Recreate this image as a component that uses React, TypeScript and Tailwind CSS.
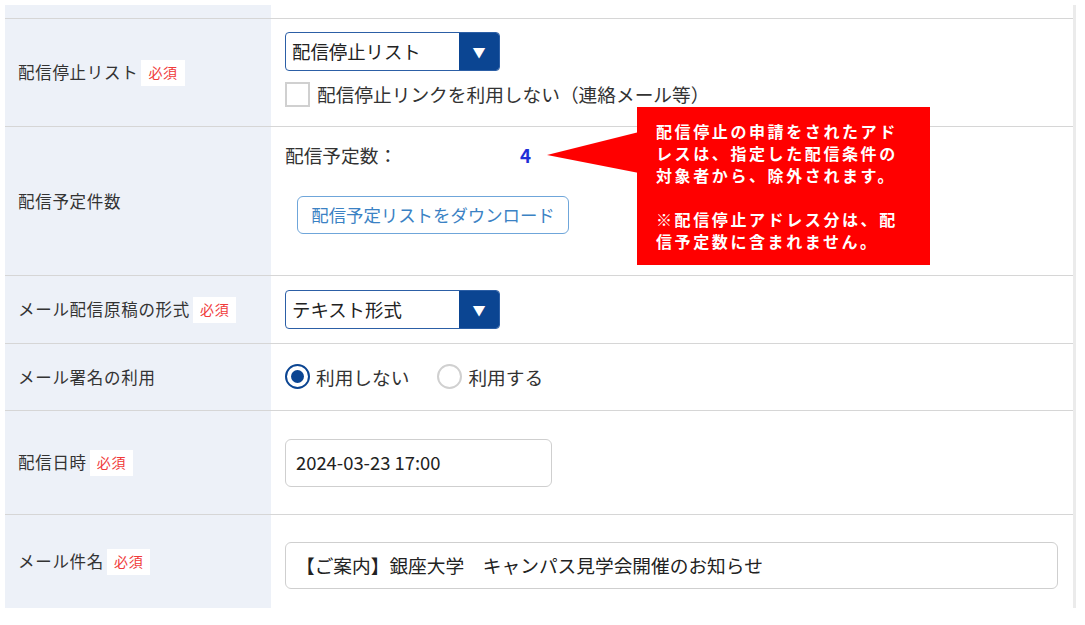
import React from "react";

const font = { fontFamily: '"Noto Sans CJK JP", "Noto Sans", sans-serif' };

const Required = () => (
  <span className="ml-[3px] inline-flex h-[26px] items-center bg-white px-[7px] text-[14px] text-[#f03a3a]">
    必須
  </span>
);

const Label = ({ text, required }: { text: string; required?: boolean }) => (
  <div className="flex w-[266px] shrink-0 items-center bg-[#edf1f8] pl-[13px] text-[16.5px] tracking-[0.7px] text-[#333]">
    <span>{text}</span>
    {required && <Required />}
  </div>
);

const Select = ({ value }: { value: string }) => (
  <div className="flex h-[39px] w-[215px] overflow-hidden rounded-[4px] border border-[#2c5fa6] bg-white">
    <div className="flex flex-1 items-center pl-[6px] text-[18.4px] text-[#222]">{value}</div>
    <div className="flex w-[40px] items-center justify-center bg-[#0b4592] text-[13px] text-white">▼</div>
  </div>
);

const Radio = ({ checked, label }: { checked?: boolean; label: string }) => (
  <label className="flex items-center gap-[6px] text-[18.7px] text-[#333]">
    <span
      className={
        checked
          ? "flex h-[25px] w-[25px] items-center justify-center rounded-full border-[2px] border-[#0b4592] bg-white"
          : "flex h-[25px] w-[25px] items-center justify-center rounded-full border-[2px] border-[#d0d0d0] bg-white"
      }
    >
      {checked && <span className="h-[13px] w-[13px] rounded-full bg-[#0b4592]" />}
    </span>
    {label}
  </label>
);

export default function App() {
  return (
    <div className="relative h-[625px] w-[1085px] overflow-hidden bg-white" style={font}>
      <div className="flex pl-[5px] pt-[5px]">
        <div className="w-[1068px]">
          {/* partial row above */}
          <div className="flex h-[13px]">
            <div className="w-[266px] bg-[#edf1f8]" />
          </div>

          <div className="flex h-[108px] border-t border-[#d6d6d6]">
            <Label text="配信停止リスト" required />
            <div className="flex flex-col pl-[14px] pt-[13px]">
              <Select value="配信停止リスト" />
              <div className="mt-[9px] flex items-center gap-[7px] text-[18.7px] text-[#333]">
                <span className="h-[25px] w-[25px] border-[2px] border-[#d0d0d0] bg-white" />
                配信停止リンクを利用しない（連絡メール等）
              </div>
            </div>
          </div>

          <div className="flex h-[149px] border-t border-[#d6d6d6]">
            <Label text="配信予定件数" />
            <div className="flex flex-col pl-[14px] pt-[15px]">
              <div className="flex items-center text-[18.7px] leading-[25px] text-[#333]">
                <span className="w-[235px]">配信予定数：</span>
                <span className="font-bold text-[#1f2fd6]">4</span>
              </div>
              <button
                type="button"
                className="ml-[12px] mt-[29px] h-[38px] w-[272px] rounded-[6px] border border-[#6fa6da] bg-white text-[17.4px] text-[#3b82c4]"
              >
                配信予定リストをダウンロード
              </button>
            </div>
          </div>

          <div className="flex h-[68px] border-t border-[#d6d6d6]">
            <Label text="メール配信原稿の形式" required />
            <div className="flex items-center pl-[14px]">
              <Select value="テキスト形式" />
            </div>
          </div>

          <div className="flex h-[67px] border-t border-[#d6d6d6]">
            <Label text="メール署名の利用" />
            <div className="flex items-center gap-[28px] pl-[14px]">
              <Radio checked label="利用しない" />
              <Radio label="利用する" />
            </div>
          </div>

          <div className="flex h-[104px] border-t border-[#d6d6d6]">
            <Label text="配信日時" required />
            <div className="flex items-center pl-[14px]">
              <div className="flex h-[48px] w-[267px] items-center rounded-[6px] border border-[#cfcfcf] pl-[10px] text-[18.4px] text-[#222]">
                2024-03-23 17:00
              </div>
            </div>
          </div>

          <div className="flex h-[94px] border-t border-[#d6d6d6]">
            <Label text="メール件名" required />
            <div className="flex flex-1 items-start pl-[14px] pr-[15px] pt-[27px]">
              <div className="flex h-[47px] flex-1 items-center rounded-[6px] border border-[#cfcfcf] pl-[10px] text-[18.7px] text-[#222]">
                【ご案内】銀座大学　キャンパス見学会開催のお知らせ
              </div>
            </div>
          </div>
        </div>
        <div className="h-[603px] w-[3px] bg-[#ebebeb]" />
      </div>

      {/* callout */}
      <div className="absolute left-[637px] top-[107px] h-[158px] w-[293px] bg-[#ff0000] pl-[19px] pt-[13px] text-[16px] font-bold leading-[22px] tracking-[2.6px] text-white">
        <div>配信停止の申請をされたアド</div>
        <div>レスは、指定した配信条件の</div>
        <div>対象者から、除外されます。</div>
        <div className="h-[22px]" />
        <div>※配信停止アドレス分は、配</div>
        <div>信予定数に含まれません。</div>
      </div>
      <svg className="absolute left-[547px] top-[130px]" width="92" height="45" viewBox="0 0 92 45">
        <polygon points="0,25 92,2 92,43" fill="#ff0000" />
      </svg>
    </div>
  );
}
